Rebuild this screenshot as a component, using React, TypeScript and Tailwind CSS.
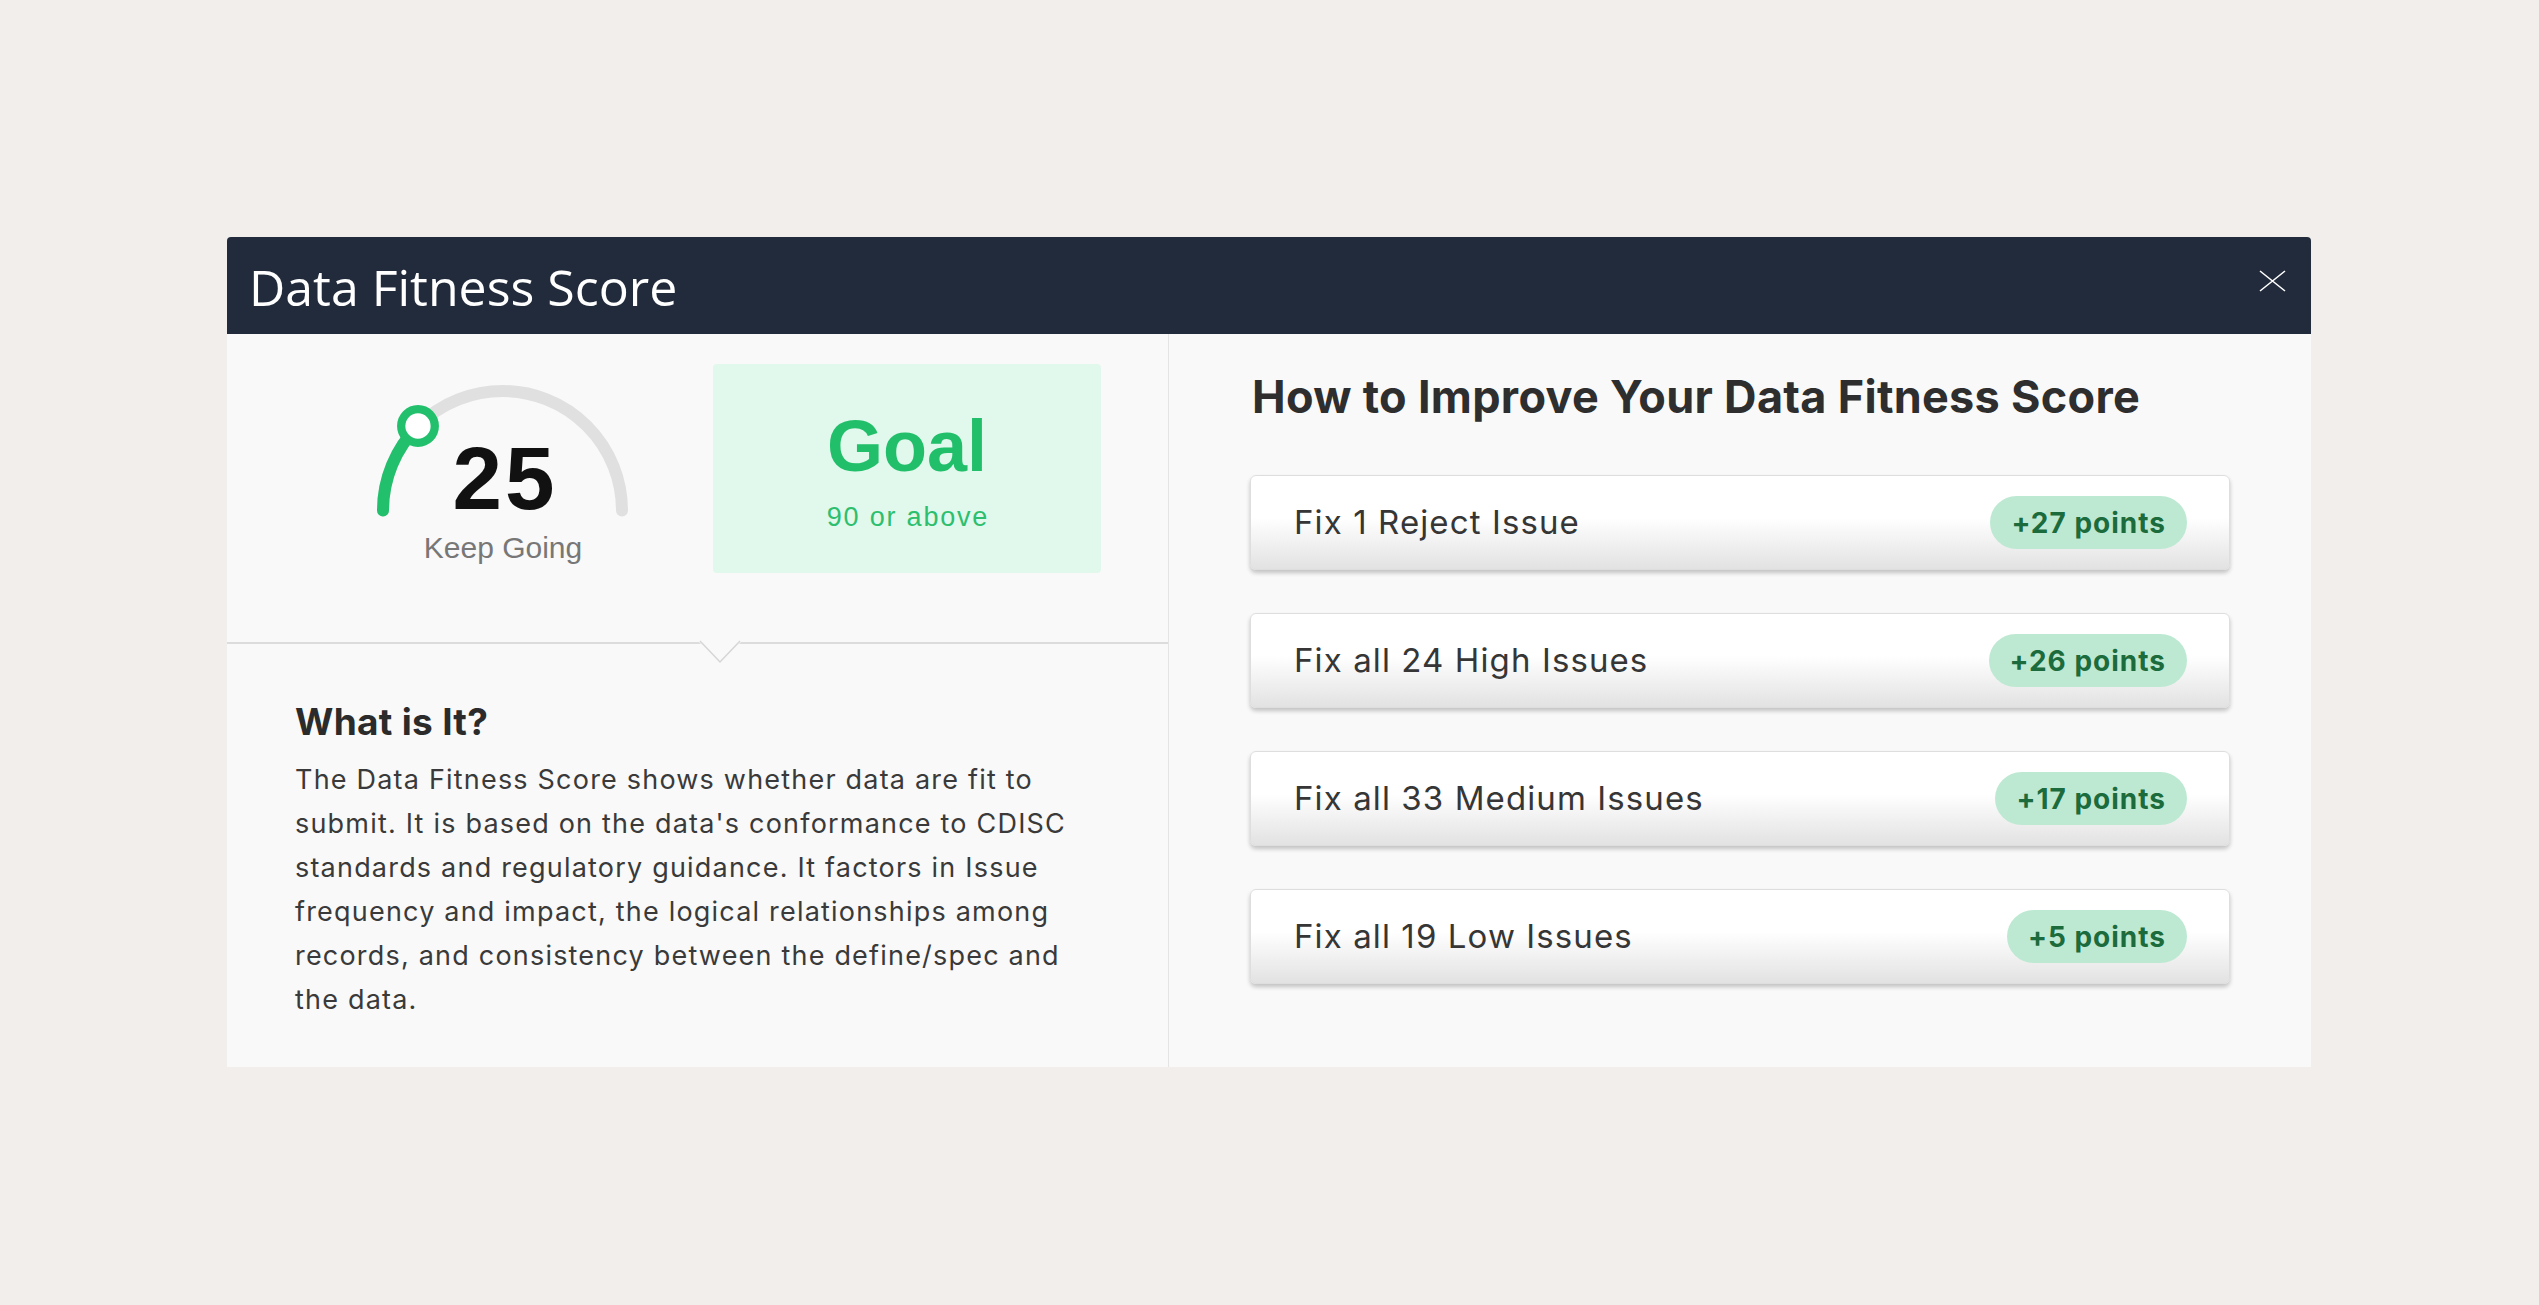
/**
 * Data Fitness Score dialog
 */

const improvements = [
  { label: 'Fix 1 Reject Issue', points: '+27 points' },
  { label: 'Fix all 24 High Issues', points: '+26 points' },
  { label: 'Fix all 33 Medium Issues', points: '+17 points' },
  { label: 'Fix all 19 Low Issues', points: '+5 points' },
]

function Gauge({ score }: { score: number }) {
  const cx = 129.5
  const cy = 135.5
  const r = 119.5
  const angle = Math.PI - (score / 100) * Math.PI
  const kx = cx + r * Math.cos(angle)
  const ky = cy - r * Math.sin(angle)

  return (
    <div className="relative w-[260px] h-[200px]">
      <svg className="absolute inset-0" width="260" height="200" viewBox="0 0 260 200">
        <path
          d={`M ${cx - r} ${cy} A ${r} ${r} 0 0 1 ${cx + r} ${cy}`}
          fill="none"
          stroke="#e0e0e0"
          strokeWidth="12"
          strokeLinecap="round"
        />
        <path
          d={`M ${cx - r} ${cy} A ${r} ${r} 0 0 1 ${kx} ${ky}`}
          fill="none"
          stroke="#22c06c"
          strokeWidth="12"
          strokeLinecap="round"
        />
        <circle cx={kx} cy={ky} r="16.8" fill="#ffffff" stroke="#22c06c" strokeWidth="8.3" />
      </svg>
      <div className="absolute left-0 right-0 top-[59px] text-center font-['Liberation_Sans',Arial,sans-serif] text-[89px] leading-none font-bold tracking-[3px] text-[#111111] pl-[4px]">
        {score}
      </div>
      <div className="absolute left-0 right-0 top-[158px] text-center font-['Liberation_Sans',Arial,sans-serif] text-[30px] leading-none text-[#777777]">
        Keep Going
      </div>
    </div>
  )
}

export default function App() {
  return (
    <div className="min-h-screen w-full bg-[#f1eeec] pt-[237px] pl-[227px] font-['Inter',sans-serif]">
      <div className="w-[2084px]">
        {/* Header */}
        <div className="h-[97px] bg-[#222b3c] rounded-t-[4px] flex items-center justify-between pl-[22px] pr-[25px]">
          <h1 className="text-white text-[50px] leading-none font-['Open_Sans',sans-serif] pt-[2px]">
            Data Fitness Score
          </h1>
          <button className="w-[27px] h-[22px] mb-[9px] flex items-center justify-center">
            <svg width="27" height="22" viewBox="0 0 27 22">
              <path d="M1 1 L26 21 M26 1 L1 21" stroke="#ffffff" strokeWidth="1.6" fill="none" />
            </svg>
          </button>
        </div>

        {/* Body */}
        <div className="flex h-[733px] bg-[#f9f9f9]">
          {/* Left column */}
          <div className="w-[942px] border-r border-[#e4e4e4] flex flex-col">
            <div className="relative h-[310px] border-b-2 border-[#dcdcdc] flex items-start pl-[146px]">
              <div className="mt-[41px]">
                <Gauge score={25} />
              </div>
              <div className="ml-[80px] mt-[30px] w-[388px] h-[209px] rounded-[4px] bg-[#e1f8ec] flex flex-col items-center pt-[46px] font-['Liberation_Sans',Arial,sans-serif]">
                <div className="text-[72px] leading-none font-bold text-[#22bf6a]">Goal</div>
                <div className="mt-[22px] pl-[2px] text-[27px] leading-none tracking-[1.8px] text-[#2dbf6e]">
                  90 or above
                </div>
              </div>
              <svg
                className="absolute left-[472px] top-[306px]"
                width="42"
                height="24"
                viewBox="0 0 42 24"
              >
                <path d="M0 2 L21 23 L42 2 Z" fill="#f9f9f9" />
                <path d="M1 1 L21 22 L41 1" fill="none" stroke="#d6d6d6" strokeWidth="1.5" />
              </svg>
            </div>
            <div className="pl-[68px] pt-[59px]">
              <h2 className="text-[37px] leading-none font-bold tracking-[0.3px] text-[#2b2b2b]">What is It?</h2>
              <p className="mt-[18px] w-[785px] text-[27px] leading-[44px] tracking-[1.2px] text-[#3a3a3a]">
                The Data Fitness Score shows whether data are fit to submit. It is based on the data's
                conformance to CDISC standards and regulatory guidance. It factors in Issue frequency and
                impact, the logical relationships among records, and consistency between the define/spec
                and the data.
              </p>
            </div>
          </div>

          {/* Right column */}
          <div className="flex-1 pl-[83px] pr-[81px] pt-[40px]">
            <h2 className="text-[45px] leading-none font-bold text-[#2e2e2e] tracking-[0.3px]">
              How to Improve Your Data Fitness Score
            </h2>
            <div className="mt-[56px] flex flex-col gap-[43px] -ml-[2px]">
              {improvements.map((item) => (
                <div
                  key={item.label}
                  className="h-[95px] rounded-[6px] border border-[#dedede] bg-[linear-gradient(to_bottom,#ffffff_45%,#e2e2e2_100%)] shadow-[0_3px_4px_rgba(0,0,0,0.22)] flex items-center justify-between pl-[43px] pr-[42px]"
                >
                  <span className="text-[33px] tracking-[1.1px] text-[#363636]">{item.label}</span>
                  <span className="h-[53px] px-[21px] rounded-full bg-[#bde9d2] flex items-center text-[28px] font-bold tracking-[1px] text-[#1c6b3c]">
                    {item.points}
                  </span>
                </div>
              ))}
            </div>
          </div>
        </div>
      </div>
    </div>
  )
}
